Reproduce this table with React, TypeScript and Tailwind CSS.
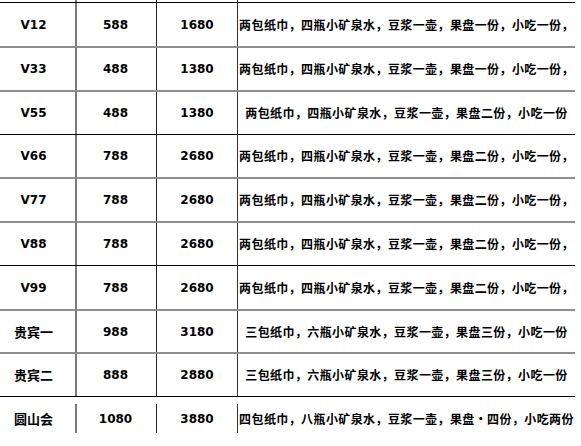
const rows = [
  { name: "V12", price: "588", min: "1680", gift: "两包纸巾，四瓶小矿泉水，豆浆一壶，果盘一份，小吃一份，", line: "black", h: "h-[44px]" },
  { name: "V33", price: "488", min: "1380", gift: "两包纸巾，四瓶小矿泉水，豆浆一壶，果盘一份，小吃一份，", line: "gray", h: "h-[44px]" },
  { name: "V55", price: "488", min: "1380", gift: "两包纸巾，四瓶小矿泉水，豆浆一壶，果盘二份，小吃一份", line: "gray", h: "h-[44px]" },
  { name: "V66", price: "788", min: "2680", gift: "两包纸巾，四瓶小矿泉水，豆浆一壶，果盘二份，小吃一份，", line: "black", h: "h-[43px]" },
  { name: "V77", price: "788", min: "2680", gift: "两包纸巾，四瓶小矿泉水，豆浆一壶，果盘二份，小吃一份，", line: "gray", h: "h-[44px]" },
  { name: "V88", price: "788", min: "2680", gift: "两包纸巾，四瓶小矿泉水，豆浆一壶，果盘二份，小吃一份，", line: "gray", h: "h-[44px]" },
  { name: "V99", price: "788", min: "2680", gift: "两包纸巾，四瓶小矿泉水，豆浆一壶，果盘二份，小吃一份，", line: "black", h: "h-[44px]" },
  { name: "贵宾一", price: "988", min: "3180", gift: "三包纸巾，六瓶小矿泉水，豆浆一壶，果盘三份，小吃一份", line: "gray", h: "h-[43px]" },
  { name: "贵宾二", price: "888", min: "2880", gift: "三包纸巾，六瓶小矿泉水，豆浆一壶，果盘三份，小吃一份", line: "gray", h: "h-[44px]" },
  { name: "圆山会", price: "1080", min: "3880", gift: "四包纸巾，八瓶小矿泉水，豆浆一壶，果盘・四份，小吃两份", line: "black", h: "h-[37px] pt-[7px]" },
]

const num = "font-['DejaVu_Sans',sans-serif] font-bold text-[12px]"
const cjk = "font-['Noto_Sans_CJK_SC',sans-serif] font-bold text-[12px]"

export default function App() {
  return (
    <div className="w-[581px] h-[446px] bg-white text-black">
      <div className="w-[575px]">
        {/* stub of the vertical rules above the top line */}
        <div className="flex h-[2px]">
          <div className="w-[75px]" />
          <div className="w-[81px] border-l-2 border-[#7a7a7a]" />
          <div className="w-[81px] border-l border-[#222]" />
          <div className="flex-1 border-l border-[#333]" />
        </div>
        {rows.map((r) => (
          <div
            key={r.name}
            className={
              r.line === "black"
                ? "flex border-t border-black " + r.h
                : "flex border-t-2 border-[#8e8e8e] " + r.h
            }
          >
            <div className={"w-[75px] flex items-center justify-center pr-[8px] " + (/^V/.test(r.name) ? num : cjk + " text-[13px]")}>
              {r.name}
            </div>
            <div className={"w-[81px] border-l-2 border-[#7a7a7a] flex items-center justify-center pr-[2px] " + num}>
              {r.price}
            </div>
            <div className={"w-[81px] border-l border-[#222] flex items-center justify-center " + num}>
              {r.min}
            </div>
            <div className={"flex-1 border-l border-[#333] flex items-center justify-center whitespace-nowrap tracking-[0.4px] " + cjk}>
              {r.gift}
            </div>
          </div>
        ))}
      </div>
    </div>
  )
}
